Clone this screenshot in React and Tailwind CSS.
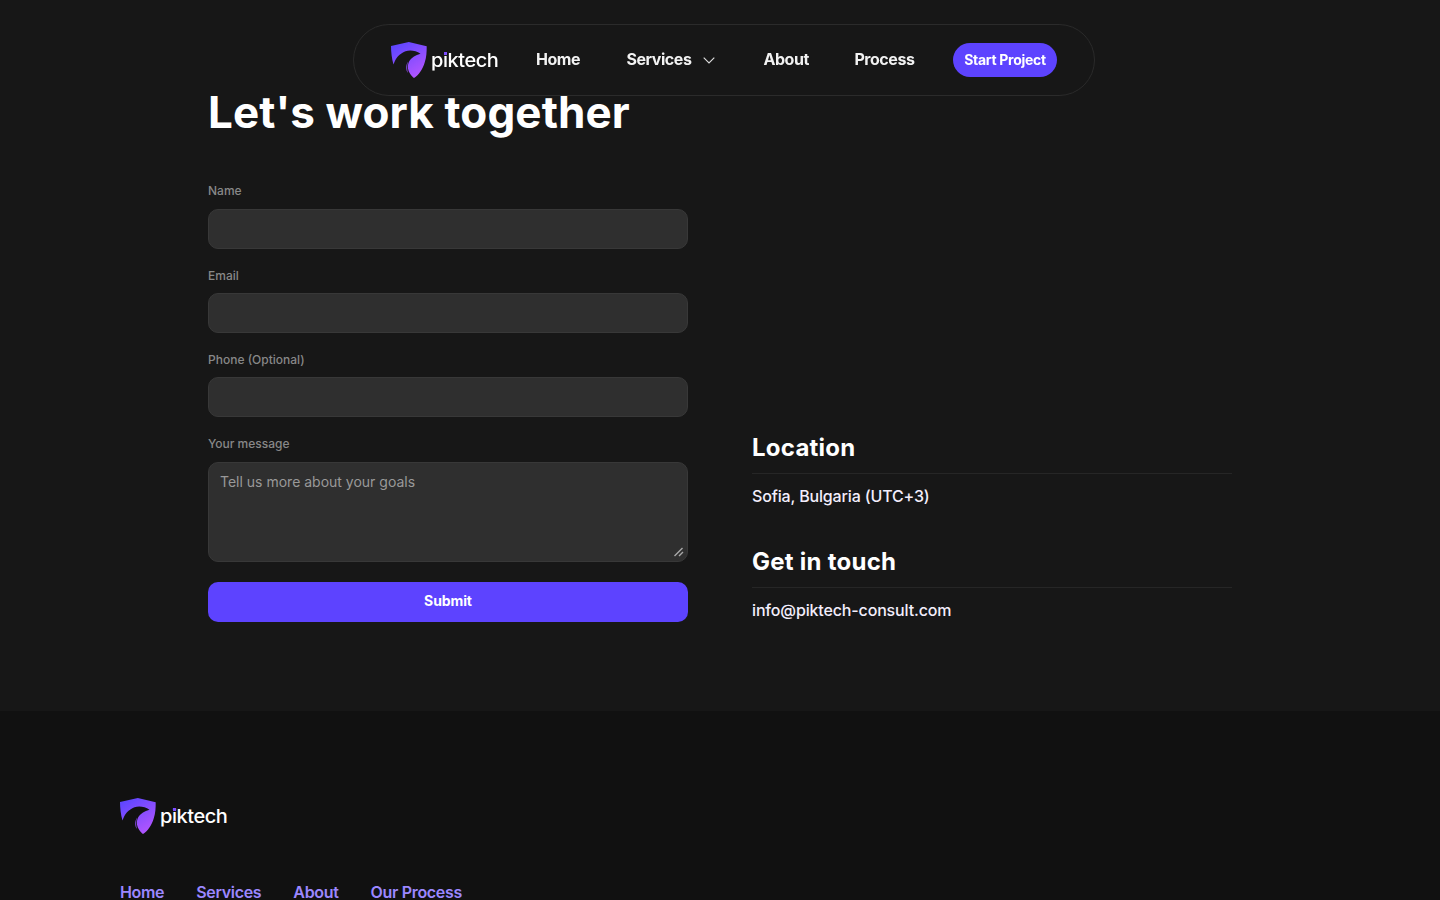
import React from "react";

function Logo({ id }) {
  return (
    <div className="relative flex h-9 w-[108px] shrink-0">
      <svg width="36" height="36" viewBox="0 0 36 36" className="shrink-0">
        <defs>
          <linearGradient id={id} x1="6" y1="2" x2="26" y2="34" gradientUnits="userSpaceOnUse">
            <stop offset="0" stopColor="#5f46ff" />
            <stop offset="1" stopColor="#b055ff" />
          </linearGradient>
        </defs>
        <path
          fill={`url(#${id})`}
          d="M0 4 L17.800 0 L35.700 4.200 C35.700 10 35.500 15 33.700 20.500 C31.700 27 28 33 23 36 C20.500 34.300 17.700 30.500 17 26.500 C16.300 21 19 14.500 29.500 11.800 C25 8.700 19.500 7.700 14.500 9.200 C8.500 11.500 4.500 16 2.500 22.500 C0.800 16.500 0 10 0 4 Z"
        />
        <path
          fill={`url(#${id})`}
          d="M17 19.500 C14.600 23.500 14.900 28 16.800 31 C15.900 27 15.900 23 17 19.500 Z"
        />
      </svg>
      <span className="ml-1 mt-[4px] origin-center scale-y-[0.93] font-['Inter',sans-serif] text-[20px] leading-7 font-medium tracking-[-0.45px] text-white">
        piktech
      </span>
      <span className="absolute left-[53px] top-[10px] h-[3px] w-[3px] bg-[#7c4dff]" />
    </div>
  );
}

function Field({ label, shift = "pt-px" }) {
  return (
    <label className="flex flex-col gap-2">
      <span className={`${shift} text-[12px] leading-[18px] font-medium text-[#888888]`}>{label}</span>
      <input className="h-10 w-full rounded-[10px] border border-[#383838] bg-[#2f2f2f] px-3 outline-none" />
    </label>
  );
}

function Info({ title, children }) {
  return (
    <div>
      <h2 className="border-b border-[#262626] pb-[11px] text-[24px] leading-[29px] font-bold tracking-[0.25px] text-white">{title}</h2>
      <p className="mt-[9px] text-[16px] leading-[26px] font-medium tracking-[-0.15px] text-[#f3eefc]">{children}</p>
    </div>
  );
}

export default function App() {
  return (
    <div className="relative flex h-[900px] w-[1440px] flex-col overflow-hidden bg-[#171717] font-['Inter',sans-serif]">
      <header className="absolute left-[353px] top-6 z-10 flex h-[72px] w-[742px] items-center rounded-full border border-[#2b2b2b] bg-[#171717] pl-[37px] text-[16px] font-bold tracking-[-0.45px] text-[#f2f2f2] will-change-transform">
        <Logo id="logo-nav" />
        <nav className="-mt-[2px] ml-[37px] flex items-center">
          <a className="w-[90.4px]">Home</a>
          <a className="flex w-[137px] items-center">
            Services
            <svg width="12" height="7" viewBox="0 0 12 7" fill="none" stroke="#dddddd" strokeWidth="1.100" className="ml-[12px] mt-[3px]">
              <path d="M0.700 0.700 L6 6 L11.300 0.700" />
            </svg>
          </a>
          <a className="w-[91px]">About</a>
          <a className="w-[98.600px]">Process</a>
        </nav>
        <button className="flex h-[34px] w-[104px] items-center justify-center rounded-full bg-[#5d43ff] pb-[2px] text-[14px] font-bold whitespace-nowrap tracking-[-0.300px] text-white">
          Start Project
        </button>
      </header>

      <main className="h-[711px] shrink-0 px-52 pt-[85px]">
        <h1 className="text-[44px] leading-[54px] font-bold tracking-[0.120px] text-white">Let's work together</h1>
        <div className="mt-[43px] grid grid-cols-2 gap-16">
          <form className="flex flex-col gap-[17px]">
            <Field label="Name" shift="pb-px" />
            <Field label="Email" />
            <Field label="Phone (Optional)" />
            <label className="flex flex-col gap-[9px]">
              <span className="pt-px text-[12px] leading-[18px] font-medium text-[#888888]">Your message</span>
              <span className="relative block">
                <textarea
                  placeholder="Tell us more about your goals"
                  className="block h-[100px] w-full resize-none rounded-[10px] border border-[#383838] bg-[#2f2f2f] px-[11px] py-[8px] text-[14px] leading-[21px] text-white outline-none placeholder:text-[#999999]"
                />
                <svg width="10" height="10" viewBox="0 0 10 10" fill="none" stroke="#a8a8a8" strokeWidth="1.400" className="absolute right-1 bottom-[5px]">
                  <path d="M0.500 9 L8.500 1 M5 9 L9 5" />
                </svg>
              </span>
            </label>
            <button type="button" className="mt-[3px] h-10 rounded-[10px] bg-[#5d43ff] pb-[3px] text-[14px] font-bold tracking-[-0.100px] text-white">
              Submit
            </button>
          </form>
          <div className="-mb-px flex flex-col justify-end gap-[38px]">
            <Info title="Location">Sofia, Bulgaria (UTC+3)</Info>
            <Info title="Get in touch">info@piktech-consult.com</Info>
          </div>
        </div>
      </main>

      <footer className="flex-1 bg-[#111111] px-[120px] pt-[87px]">
        <Logo id="logo-footer" />
        <nav className="mt-[46px] flex gap-8 text-[16px] leading-6 font-semibold tracking-[-0.32px] text-[#9b87ff]">
          <a>Home</a>
          <a>Services</a>
          <a>About</a>
          <a>Our Process</a>
        </nav>
      </footer>
    </div>
  );
}
